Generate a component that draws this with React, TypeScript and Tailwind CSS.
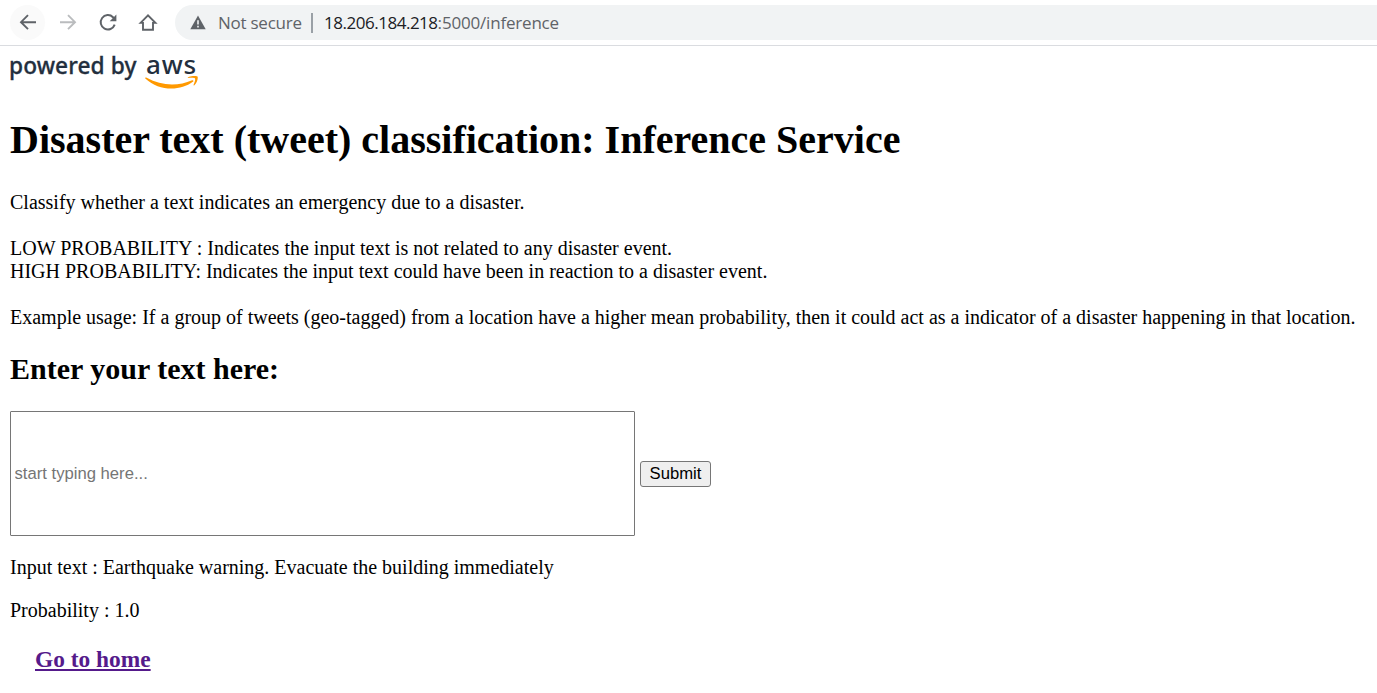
import React from "react";

function BrowserBar() {
  return (
    <header className="flex h-[46px] items-start border-b border-[#dadce0] bg-white pt-[5px] font-['Open_Sans',sans-serif]">
      <div className="flex h-[35px] w-[175px] shrink-0 items-center pl-[10px] text-[#5f6368]">
        <button aria-label="Back" className="flex size-[35px] items-center justify-center rounded-full bg-[#fafafa]">
          <svg width="20" height="20" viewBox="0 0 20 20" fill="none" stroke="currentColor" strokeWidth="1.9">
            <path d="M18 9.2H3M10 2.2l-7 7 7 7" />
          </svg>
        </button>
        <button aria-label="Forward" className="ml-[5px] flex size-[35px] items-center justify-center text-[#babcbe]">
          <svg width="20" height="20" viewBox="0 0 20 20" fill="none" stroke="currentColor" strokeWidth="1.9">
            <path d="M2 9.2h15M10 2.2l7 7-7 7" />
          </svg>
        </button>
        <button aria-label="Reload" className="ml-[5px] flex size-[35px] items-center justify-center">
          <svg width="20" height="20" viewBox="0 0 20 20" fill="none">
            <path d="M16.7 11.7A7.2 7.2 0 1 1 15 4.2L16.8 6" stroke="currentColor" strokeWidth="2" />
            <path d="M18.4 1.6v6.7h-6.7z" fill="currentColor" />
          </svg>
        </button>
        <button aria-label="Home" className="ml-[5px] flex size-[35px] items-center justify-center">
          <svg width="20" height="20" viewBox="0 0 20 20" fill="none" stroke="currentColor" strokeWidth="1.9">
            <path d="M2.6 9.9 10 2.4l7.4 7.5H15v6.8H5V9.9z" />
          </svg>
        </button>
      </div>
      <div className="flex h-[35px] min-w-0 flex-1 items-center rounded-l-full bg-[#f1f3f4] pl-[15px] text-[17px] whitespace-nowrap text-[#5f6368]">
        <svg className="shrink-0" width="16" height="15" viewBox="0 0 16 15">
          <path d="M8 .5 15.7 14.2H.3z" fill="#5f6368" />
          <path d="M8 5.3v4.2M8 10.8v1.7" stroke="#f1f3f4" strokeWidth="1.6" />
        </svg>
        <span className="ml-[12px] w-[84px] tracking-[-0.25px]">Not secure</span>
        <span className="ml-[9px] h-5 w-[2px] bg-[#9aa0a6]" />
        <span className="ml-[11px] tracking-[-0.19px]">
          <span className="tracking-[-0.48px] text-[#202124]">18.206.184.218</span>:5000/inference
        </span>
      </div>
    </header>
  );
}

function PoweredByAws() {
  return (
    <div className="flex h-[46px] pl-[9px] font-['Noto_Sans',sans-serif] text-[#232f3e]">
      <span className="mt-[2px] w-[136px] text-[22.7px] leading-[36px] font-medium tracking-[0.1px] whitespace-nowrap [-webkit-text-stroke:0.3px_#232f3e]">powered by</span>
      <div className="flex w-[54px] flex-col">
        <span className="pl-[1px] text-[26px] leading-[36px] font-medium tracking-[0.8px] whitespace-nowrap">aws</span>
        <svg className="-mt-[6px]" width="54" height="14" viewBox="0 0 54 14">
          <path d="M.3 1.8c.3-.5.8-.3 1.4 0 14.8 8.4 31.7 8.6 45.4 2.5 1.1-.5 1.9.7.8 1.5C35.2 15.4 13.8 15.2.6 2.8.2 2.4 0 2.2.3 1.8z" fill="#ff9900" />
          <path d="M43 1.4c2.8-1.7 7.8-1.8 9.5-1 .8 1.2-.2 6.1-3.1 8.8-.6.5-1.1.2-.8-.5 1-2.3 2-5.4 1.4-6.3-.8-1-4.2-.7-6.7-.4-.8.1-.9-.2-.3-.6z" fill="#ff9900" />
        </svg>
      </div>
    </div>
  );
}

export default function App() {
  return (
    <div className="h-[693px] w-[1377px] overflow-hidden bg-white text-black">
      <BrowserBar />
      <PoweredByAws />
      <main className="pl-[10px] font-['Liberation_Serif',serif] text-[20px] leading-[23px] whitespace-nowrap">
        <h1 className="mt-[25px] text-[40px] leading-[46px] font-bold">
          Disaster text (tweet) classification: Inference Service
        </h1>
        <div className="mt-[28px]">
          <p>Classify whether a text indicates an emergency due to a disaster.</p>
          <p className="mt-[23px]">LOW PROBABILITY : Indicates the input text is not related to any disaster event.</p>
          <p>HIGH PROBABILITY: Indicates the input text could have been in reaction to a disaster event.</p>
          <p className="mt-[23px]">
            Example usage: If a group of tweets (geo-tagged) from a location have a higher mean probability, then it could act as a indicator of a disaster happening in that location.
          </p>
        </div>
        <h2 className="mt-[22px] text-[30px] leading-[35px] font-bold">Enter your text here:</h2>
        <form className="mt-[25px] flex items-center font-['Liberation_Sans',sans-serif]" onSubmit={(e) => e.preventDefault()}>
          <input
            aria-label="Text"
            placeholder="start typing here..."
            className="h-[125px] w-[625px] rounded-[1px] border border-[#767676] bg-white px-[3.5px] text-[16.67px] placeholder:text-[#757575]"
          />
          <button className="ml-[5px] h-[26px] w-[71px] rounded-[3px] border border-[#767676] bg-[#efefef] text-[16.67px] leading-[24px]">
            Submit
          </button>
        </form>
        <p className="mt-[20px]">Input text : Earthquake warning. Evacuate the building immediately</p>
        <p className="mt-[20px]">Probability : 1.0</p>
        <h3 className="mt-[24px] pl-[25px] text-[23.4px] leading-[27px] font-bold text-[#551a8b]">
          <a className="underline" href="#home">Go to home</a>
        </h3>
      </main>
    </div>
  );
}
